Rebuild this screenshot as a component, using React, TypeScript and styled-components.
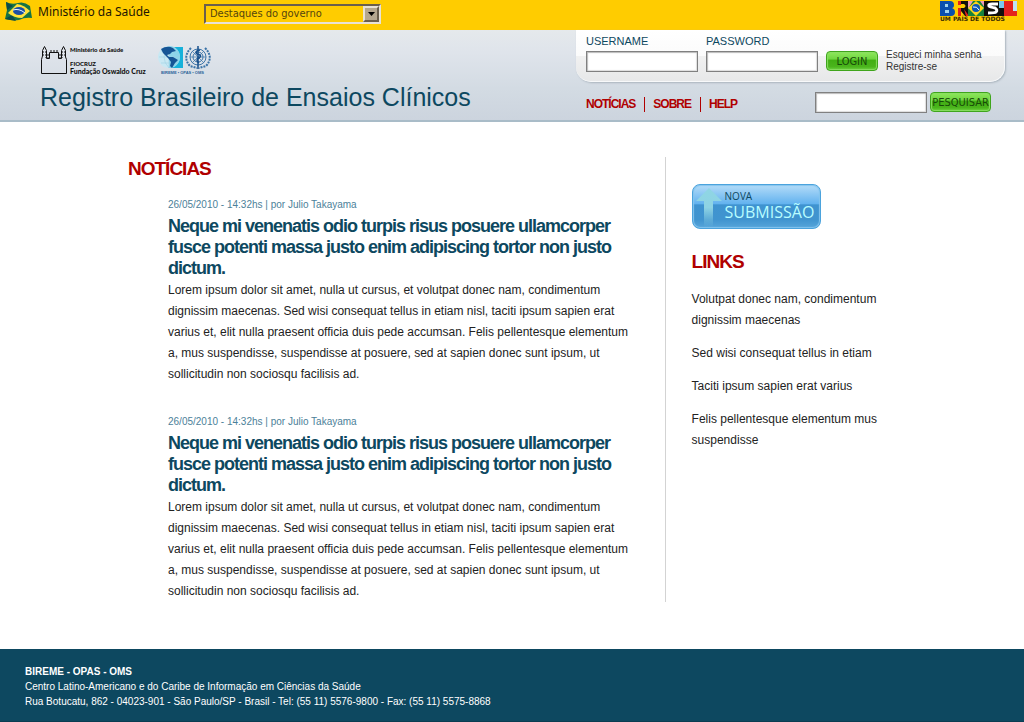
import React from "react";
import styled, { createGlobalStyle } from "styled-components";

const navy = "#0d4860";
const red = "#b00000";

const GlobalStyle = createGlobalStyle`
  * { box-sizing: border-box; }
  body {
    margin: 0;
    background: #fff;
    color: #222;
    font-family: "Liberation Sans", Arial, sans-serif;
    font-size: 12px;
  }
  h1, h2, h3, p, ul { margin: 0; padding: 0; }
  ul { list-style: none; }
  a { color: inherit; text-decoration: none; }
`;

const GovBar = styled.div`
  display: flex;
  align-items: flex-start;
  height: 30px;
  padding: 0 6px 0 4px;
  background: #ffcc00;
`;

const Ministry = styled.a`
  display: flex;
  align-items: center;
  gap: 5px;
  width: 200px;
  height: 24px;
  color: #1d1603;
  font: 12px/24px "Noto Sans", sans-serif;
`;

const SelectFrame = styled.div`
  display: grid;
  margin-top: 4px;
  width: 177px;
  height: 20px;
  > * { grid-area: 1 / 1; }
`;

const GovSelect = styled.select`
  appearance: none;
  width: 100%;
  height: 20px;
  padding: 0 20px 0 4px;
  border: 2px solid;
  border-color: #6b5f4d #e9e2d5 #e9e2d5 #6b5f4d;
  border-radius: 0;
  background: #ffcc00;
  color: #54450f;
  font: 11px/14px "DejaVu Sans Condensed", "DejaVu Sans", sans-serif;
`;

const SelectArrow = styled.span`
  display: grid;
  place-items: center;
  justify-self: end;
  margin: 2px 2px 0 0;
  width: 16px;
  height: 16px;
  border: 2px solid;
  border-color: #e9e2d5 #6b5f4d #6b5f4d #e9e2d5;
  background: #b5a78f;
  pointer-events: none;
`;

const BrasilLink = styled.a`
  margin-left: auto;
  svg { display: block; }
`;

const Header = styled.header`
  display: flex;
  justify-content: space-between;
  border-bottom: 2px solid #a9bcc8;
  background: linear-gradient(#e5e9ec, #dfe4eb 25%, #d3dbe3 65%, #ccd4de);
`;

const Brand = styled.div`
  padding: 14px 0 6px 40px;
`;

const Logos = styled.div`
  display: flex;
  gap: 12px;
  height: 36px;
`;

const SiteTitle = styled.h1`
  color: ${navy};
  font-size: 25px;
  font-weight: 400;
  line-height: 34px;
  white-space: nowrap;
`;

const Tools = styled.div`
  flex: none;
  padding-right: 19px;
`;

const LoginPanel = styled.form`
  display: flex;
  gap: 8px;
  height: 52px;
  padding: 4px 18px 0 10px;
  border: solid #f8f9fa;
  border-width: 0 1px 1px 0;
  border-radius: 0 0 15px 15px;
  background: linear-gradient(#fff 0, #fbfbfb 50%, #f1f1f1 51%, #e7e8e9);
  box-shadow: 1px 1px 2px #aab4bd;
`;

const Field = styled.label`
  display: block;
  width: 112px;
  color: ${navy};
  font-size: 11px;
  line-height: 14px;
`;

const TextInput = styled.input`
  display: block;
  width: 112px;
  height: 21px;
  padding: 2px;
  border: 1px solid #808080;
  border-radius: 0;
  background: #fff;
  box-shadow: inset 1px 1px 1px #bbb, inset -1px -1px 1px #ddd;
  font: 12px "Liberation Sans", Arial, sans-serif;
`;

const FieldInput = styled(TextInput)`
  margin-top: 3px;
`;

const GreenButton = styled.button<{ $width: number }>`
  flex: none;
  display: flex;
  align-items: center;
  justify-content: center;
  width: ${(p) => p.$width}px;
  height: 20px;
  padding: 2px 0 0;
  border: 1px solid #3fa51c;
  border-radius: 4px;
  background: linear-gradient(#8fe85d, #6fd540 40%, #41ae13 44%, #4ab41c 80%, #65cf3a);
  box-shadow: inset 0 0 1px 1px #8ade62;
  color: #174b08;
  font: 11px/14px "DejaVu Sans Condensed", "DejaVu Sans", sans-serif;
`;

const LoginSubmit = styled.div`
  padding-top: 17px;
`;

const AccountLinks = styled.ul`
  padding-top: 15px;
  width: 100px;
  color: #333;
  font-size: 10px;
  line-height: 12px;
  white-space: nowrap;
`;

const NavRow = styled.div`
  display: flex;
  justify-content: space-between;
  align-items: center;
  margin-top: 10px;
  padding: 0 14px 0 10px;
`;

const Nav = styled.nav`
  display: flex;
  padding-top: 4px;
  color: ${red};
  font-size: 12px;
  font-weight: 700;
  letter-spacing: -1px;
  line-height: 15px;
`;

const NavLink = styled.a`
  & + & {
    margin-left: 9px;
    padding-left: 8px;
    border-left: 1px solid ${red};
  }
`;

const Search = styled.form`
  display: flex;
  gap: 3px;
`;

const Main = styled.main`
  display: grid;
  grid-template-columns: 7fr 3fr;
  width: 75%;
  margin: 35px auto 47px;
`;

const News = styled.section`
  padding-right: 25px;
  border-right: 1px solid #d3d3d3;
`;

const SectionTitle = styled.h2`
  color: ${red};
  font-size: 19px;
  font-weight: 700;
  letter-spacing: -1px;
  line-height: 24px;
`;

const Article = styled.article`
  margin-left: 40px;
  padding-top: 18px;
  & + & { padding-top: 31px; }
`;

const Meta = styled.p`
  color: #4c8199;
  font-size: 10px;
  line-height: 12px;
`;

const Headline = styled.h3`
  margin: 5px 0 1px;
  color: ${navy};
  font-size: 18px;
  letter-spacing: -1px;
  line-height: 21px;
`;

const Body = styled.p`
  font-size: 12px;
  line-height: 21px;
`;

const Side = styled.aside`
  padding: 27px 0 0 26px;
`;

const Submission = styled.button`
  display: flex;
  align-items: flex-start;
  gap: 3px;
  width: 129px;
  height: 45px;
  margin-bottom: 21px;
  padding: 2px 0 0 3px;
  border: 1px solid #4ba3dd;
  border-radius: 8px;
  background: linear-gradient(#b4dcf8, #62b2ef 44%, #3f93d0 46%, #4094cf 80%, #56a5da);
  box-shadow: inset 0 0 1px 1px #86c5ee;
  text-align: left;
  svg { flex: none; }
`;

const SubmissionText = styled.span`
  padding-top: 2px;
  color: #b9fdff;
  font: 16px/18px "Open Sans", sans-serif;
  small {
    display: block;
    color: ${navy};
    font: 10px/14px "Open Sans", sans-serif;
  }
`;

const LinkList = styled.ul`
  display: flex;
  flex-direction: column;
  gap: 12px;
  width: 192px;
  margin-top: 15px;
  font-size: 12px;
  line-height: 21px;
`;

const Footer = styled.footer`
  padding: 15px 25px 12px;
  border-bottom: 1px solid #0a3d52;
  background: ${navy};
  color: #fff;
  font-size: 10px;
  line-height: 15px;
`;

const Flag = () => (
  <svg width="29" height="22" viewBox="0 0 29 22" aria-hidden="true">
    <path d="M2 1 Q8 4 14 2 T26 5 L28 17 Q21 16 15 19 Q8 20 1 18 L3 9Z" fill="#157345" />
    <path d="M2 1 L9 5 3 9ZM1 18 L8 14 12 20Z" fill="#0b4a4a" />
    <path d="M4 12 L13 3 Q20 4 26 10 L18 17 Q10 17 4 12Z" fill="#ffe23c" />
    <ellipse cx="15" cy="10" rx="6" ry="4" fill="#1b4fa3" />
    <path d="M9 9 Q15 7 21 12" fill="none" stroke="#e8f3ff" strokeWidth="1" />
  </svg>
);

const BrasilLogo = () => (
  <svg width="78" height="22" viewBox="0 0 78 22" role="img" aria-label="Brasil, um país de todos">
    <path d="M0 1h10q4 0 4 4 0 3-2 3 3 1 3 4 0 4-4 4H0z" fill="#0b4fae" />
    <path d="M5 4h3v3H5zM5 10h4v3H5z" fill="#9fd3ef" />
    <path d="M18 1h3v4h-3zM18 8h3v8h-3z" fill="#e3231d" />
    <path d="M21 1h8v15h-8z" fill="#10100c" />
    <path d="M21 4h3q3 2 0 4h-3zM21 11l4 5h-4z" fill="#ffcc00" />
    <path d="M24 9l5 7h-3z" fill="#e3231d" />
    <path d="M28 1h17v15H28z" fill="#18833c" />
    <path d="M28 1h5l-5 8zM40 1h5v7z" fill="#f19cb6" />
    <path d="M28 8l8-7 8 7-8 8z" fill="#ffd51c" />
    <circle cx="36" cy="8" r="4" fill="#0b56b4" />
    <path d="M33 7q4-1 6 3" stroke="#fff" fill="none" />
    <path d="M44 1h20v15H44z" fill="#10100c" />
    <path d="M58 4h-6q-4 0-3 2 1 1 6 2 3 2 1 4-1 1-8 1" stroke="#fff" strokeWidth="3" fill="none" />
    <path d="M59 1h5v7h-5z" fill="#79c8ec" />
    <path d="M64 1h9v10h4v5H64z" fill="#e3231d" />
    <path d="M73 1h4v10h-4z" fill="#bfe4f3" />
    <text x="0" y="21" fontFamily="DejaVu Sans" fontWeight="700" fontSize="6" fill="#3b2d00">UM PAÍS DE TODOS</text>
  </svg>
);

const FiocruzLogo = () => (
  <svg width="106" height="32" viewBox="0 0 106 32" role="img" aria-label="Fiocruz">
    <path
      d="M1.5 29.500V15.500L2.500 12V6.500L4.500 2.500L6.500 6.500V14.500H9.500V8.500H18.500V14.500H21.500V6.500L23.500 2.500L25.500 6.500V13L26.500 15.500V29.500Z"
      fill="none" stroke="#111" strokeWidth="1"
    />
    <path d="M3 7v6M6 7v7M8 10v5M20 10v5M22 7v7M25 7v6M10 7h8" stroke="#111" strokeWidth="1" strokeDasharray="2 1" />
    <g fontFamily="Lato" fontWeight="900" fontSize="6" fill="#111">
      <text x="30" y="8">Ministério da Saúde</text>
      <text x="30" y="22">FIOCRUZ</text>
      <text x="30" y="30" fontSize="7">Fundação Oswaldo Cruz</text>
    </g>
  </svg>
);

const BiremeLogo = () => (
  <svg width="54" height="32" viewBox="0 0 54 32" role="img" aria-label="BIREME OPAS OMS">
    <path d="M12 3h13v21H12z" fill="#16b1da" />
    <circle cx="11" cy="13" r="11" fill="#c9e8f3" />
    <path d="M11 2a11 11 0 0 1 0 22z" fill="#72cde6" opacity=".7" />
    <path d="M1 13h20M11 2v22M3 7h16M3 19h16M11 2Q1 13 11 24M11 2Q21 13 11 24" stroke="#9ed2e5" fill="none" strokeWidth=".6" />
    <path d="M3 5Q9 1 15 4L18 7 14 8 12 10 9 11 11 13 15 13 20 16 17 19 14 24 12 22 13 18 10 14 5 9Z" fill="#155596" />
    <g fill="none" stroke="#3b74a8">
      <circle cx="40" cy="13" r="8" strokeWidth="1" />
      <circle cx="40" cy="13" r="5" strokeWidth="1" />
      <path d="M32 13h16M34 7l12 12M46 7L34 19" strokeWidth=".7" />
      <path d="M33 4Q24 13 32 22L39 24M47 4Q56 13 48 22L41 24" strokeWidth="2" strokeDasharray="2 1" />
      <path d="M40 2v23" stroke="#174f8b" strokeWidth="1.500" />
      <path d="M42 6q-6 1-3 4 6 1 2 4-4 2 0 5" stroke="#174f8b" strokeWidth="1.500" />
    </g>
    <text x="3" y="30" fontFamily="Liberation Sans" fontWeight="700" fontSize="4" fill="#2a6399">BIREME • OPAS • OMS</text>
  </svg>
);

const ArrowUp = () => (
  <svg width="26" height="40" viewBox="0 0 26 40" aria-hidden="true">
    <defs>
      <linearGradient id="arrow" x1="0" y1="0" x2="0" y2="1">
        <stop offset="0" stopColor="#8fd6e4" />
        <stop offset=".5" stopColor="#8ed3e4" />
        <stop offset="1" stopColor="#8ed3e4" stopOpacity="0" />
      </linearGradient>
    </defs>
    <path d="M13 1L26 14H17V40H8V14H0Z" fill="url(#arrow)" />
  </svg>
);

const article = {
  meta: "26/05/2010 - 14:32hs | por Julio Takayama",
  title:
    "Neque mi venenatis odio turpis risus posuere ullamcorper fusce potenti massa justo enim adipiscing tortor non justo dictum.",
  body:
    "Lorem ipsum dolor sit amet, nulla ut cursus, et volutpat donec nam, condimentum dignissim maecenas. Sed wisi consequat tellus in etiam nisl, taciti ipsum sapien erat varius et, elit nulla praesent officia duis pede accumsan. Felis pellentesque elementum a, mus suspendisse, suspendisse at posuere, sed at sapien donec sunt ipsum, ut sollicitudin non sociosqu facilisis ad.",
};
const articles = [article, article];

const links = [
  "Volutpat donec nam, condimentum dignissim maecenas",
  "Sed wisi consequat tellus in etiam",
  "Taciti ipsum sapien erat varius",
  "Felis pellentesque elementum mus suspendisse",
];

export default function App() {
  return (
    <>
      <GlobalStyle />
      <GovBar>
        <Ministry href="#"><Flag />Ministério da Saúde</Ministry>
        <SelectFrame>
          <GovSelect aria-label="Destaques do governo">
            <option>Destaques do governo</option>
          </GovSelect>
          <SelectArrow>
            <svg width="7" height="4" viewBox="0 0 7 4"><path d="M0 0h7L3.500 4z" fill="#000" /></svg>
          </SelectArrow>
        </SelectFrame>
        <BrasilLink href="#"><BrasilLogo /></BrasilLink>
      </GovBar>

      <Header>
        <Brand>
          <Logos><FiocruzLogo /><BiremeLogo /></Logos>
          <SiteTitle>Registro Brasileiro de Ensaios Clínicos</SiteTitle>
        </Brand>
        <Tools>
          <LoginPanel onSubmit={(e) => e.preventDefault()}>
            <Field>USERNAME<FieldInput type="text" /></Field>
            <Field>PASSWORD<FieldInput type="password" /></Field>
            <LoginSubmit><GreenButton $width={52}>LOGIN</GreenButton></LoginSubmit>
            <AccountLinks>
              <li><a href="#">Esqueci minha senha</a></li>
              <li><a href="#">Registre-se</a></li>
            </AccountLinks>
          </LoginPanel>
          <NavRow>
            <Nav>
              <NavLink href="#">NOTÍCIAS</NavLink>
              <NavLink href="#">SOBRE</NavLink>
              <NavLink href="#">HELP</NavLink>
            </Nav>
            <Search onSubmit={(e) => e.preventDefault()}>
              <TextInput type="text" aria-label="Pesquisar" />
              <GreenButton $width={61}>PESQUISAR</GreenButton>
            </Search>
          </NavRow>
        </Tools>
      </Header>

      <Main>
        <News>
          <SectionTitle>NOTÍCIAS</SectionTitle>
          {articles.map((a, i) => (
            <Article key={i}>
              <Meta>{a.meta}</Meta>
              <Headline>{a.title}</Headline>
              <Body>{a.body}</Body>
            </Article>
          ))}
        </News>
        <Side>
          <Submission type="button">
            <ArrowUp />
            <SubmissionText><small>NOVA</small>SUBMISSÃO</SubmissionText>
          </Submission>
          <SectionTitle>LINKS</SectionTitle>
          <LinkList>
            {links.map((l) => <li key={l}><a href="#">{l}</a></li>)}
          </LinkList>
        </Side>
      </Main>

      <Footer>
        <p><strong>BIREME - OPAS - OMS</strong></p>
        <p>Centro Latino-Americano e do Caribe de Informação em Ciências da Saúde</p>
        <p>Rua Botucatu, 862 - 04023-901 - São Paulo/SP - Brasil - Tel: (55 11) 5576-9800 - Fax: (55 11) 5575-8868</p>
      </Footer>
    </>
  );
}
